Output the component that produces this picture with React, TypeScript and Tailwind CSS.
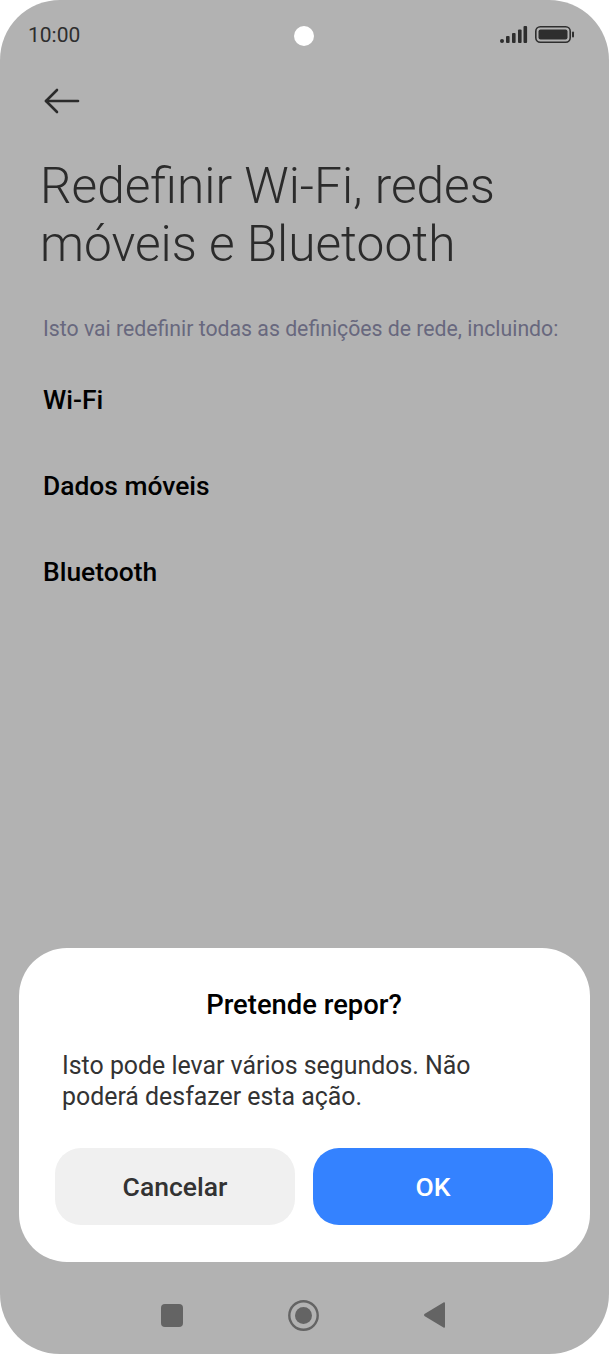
const items = ["Wi-Fi", "Dados móveis", "Bluetooth"];

function SignalBattery() {
  return (
    <svg width="76" height="20" viewBox="0 0 76 20" className="block">
      <g fill="#2e2e2e">
        <rect x="0" y="14" width="4" height="4" rx="2" />
        <rect x="6" y="11" width="3.6" height="7" rx="1" />
        <rect x="12" y="8" width="3.6" height="10" rx="1" />
        <rect x="18" y="4.5" width="3.6" height="13.5" rx="1" />
        <rect x="23.5" y="1" width="3.6" height="17" rx="1" />
      </g>
      <rect x="35.8" y="1.8" width="34.4" height="15.4" rx="4.5" fill="none" stroke="#2e2e2e" strokeWidth="1.6" />
      <rect x="38.5" y="4.5" width="29" height="10" rx="2" fill="#2e2e2e" />
      <rect x="72" y="6.5" width="2" height="6" rx="1" fill="#2e2e2e" />
    </svg>
  );
}

function BackArrow() {
  return (
    <svg width="36" height="26" viewBox="0 0 36 26" fill="none" stroke="#2b2b2b" strokeWidth="2.6" strokeLinecap="round" strokeLinejoin="round" className="block">
      <path d="M2 13H34" />
      <path d="M13 2L2 13L13 24" />
    </svg>
  );
}

function NavBar() {
  return (
    <div className="flex items-center justify-center gap-[105px] pr-[3px] h-[32px] mt-[37px] shrink-0">
      <svg width="22" height="23" viewBox="0 0 22 23" className="block">
        <rect x="0" y="0" width="22" height="23" rx="4" fill="#646464" />
      </svg>
      <svg width="31" height="31" viewBox="0 0 31 31" className="block">
        <circle cx="15.5" cy="15.5" r="14.2" fill="none" stroke="#646464" strokeWidth="2.4" />
        <circle cx="15.5" cy="15.5" r="8.5" fill="#646464" />
      </svg>
      <svg width="21" height="26" viewBox="0 0 21 26" className="block">
        <path d="M19.5 0.4C20.4 -0.1 21 0.3 21 1.2V24.8C21 25.7 20.4 26.1 19.5 25.6L0.8 14.2C-0.2 13.6 -0.2 12.4 0.8 11.8Z" fill="#646464" />
      </svg>
    </div>
  );
}

export default function App() {
  return (
    <div className="w-[609px] h-[1354px] bg-white font-['Roboto',sans-serif]">
      <div className="w-full h-full rounded-[60px] bg-[#b2b2b2] overflow-hidden flex flex-col">
        {/* status bar */}
        <div className="relative flex items-center justify-between h-[26px] mt-[22px] pl-[28px] pr-[33px] shrink-0">
          <span className="text-[21px] leading-[26px] text-[#2e2e2e]">10:00</span>
          <SignalBattery />
          <div className="absolute left-[294px] top-[4px] w-[20px] h-[20px] rounded-full bg-white" />
        </div>

        <div className="pl-[44px] mt-[40px] shrink-0">
          <BackArrow />
        </div>

        <h1 className="mt-[43px] pl-[40px] text-[49.6px] leading-[58px] font-light text-[#2b2b2b] whitespace-nowrap shrink-0">
          Redefinir Wi-Fi, redes
          <br />
          móveis e Bluetooth
        </h1>

        <p className="mt-[42px] pl-[43px] text-[21.25px] leading-[28px] text-[#68687e] whitespace-nowrap shrink-0">
          Isto vai redefinir todas as definições de rede, incluindo:
        </p>

        <div className="mt-[41px] pl-[43px] flex flex-col gap-[54px] shrink-0">
          {items.map((item) => (
            <div key={item} className="text-[26.4px] leading-[32px] font-medium text-black">
              {item}
            </div>
          ))}
        </div>

        {/* dialog */}
        <div className="mt-auto ml-[19px] mr-[19px] h-[314px] rounded-[48px] bg-white pl-[36px] pr-[37px] pt-[41px] shrink-0">
          <h2 className="text-center text-[27.4px] leading-[32px] font-medium text-black">Pretende repor?</h2>
          <p className="mt-[29px] px-[7px] text-[24.9px] leading-[31px] text-[#333333]">
            Isto pode levar vários segundos. Não poderá desfazer esta ação.
          </p>
          <div className="mt-[36px] flex gap-[18px]">
            <button className="flex-1 h-[77px] rounded-[26px] bg-[#f0f0f0] text-[26.5px] font-medium text-[#333333]">Cancelar</button>
            <button className="flex-1 h-[77px] rounded-[26px] bg-[#3482ff] text-[26.5px] font-medium text-white">OK</button>
          </div>
        </div>

        <NavBar />
        <div className="h-[23px] shrink-0" />
      </div>
    </div>
  );
}
